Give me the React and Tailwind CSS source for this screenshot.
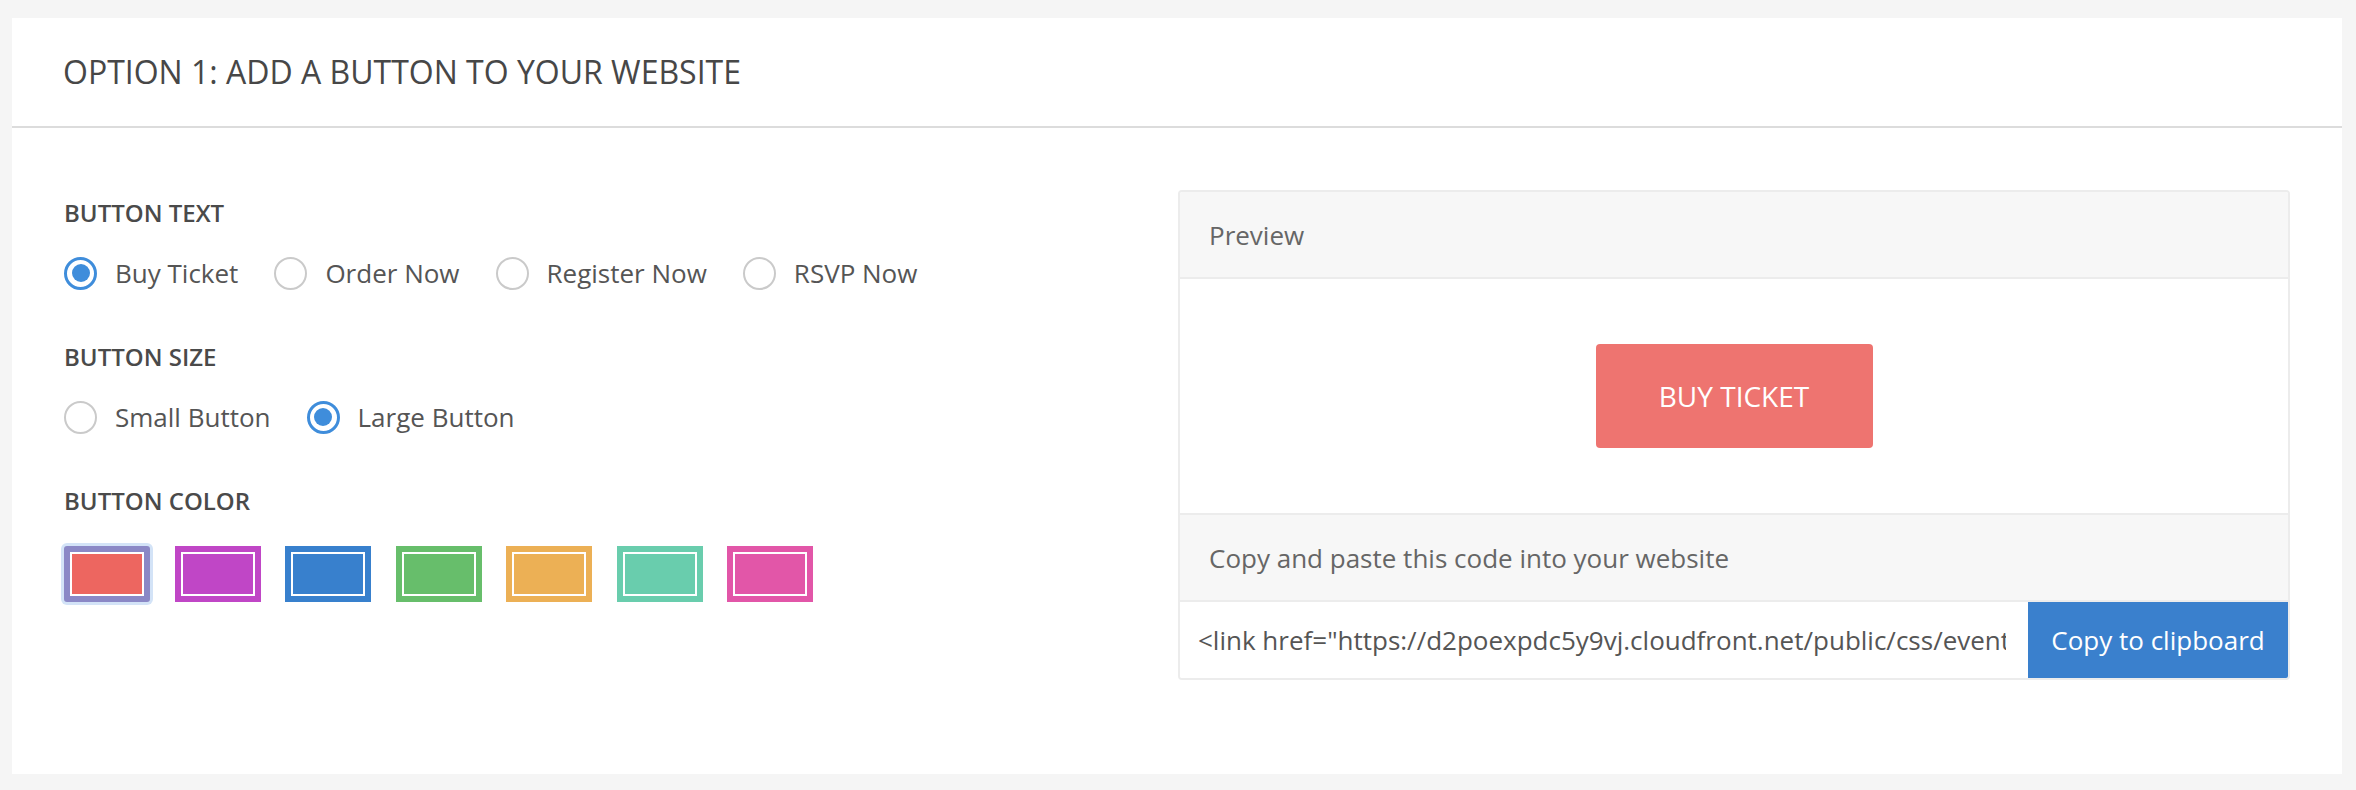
import React from "react";

const font = { fontFamily: '"Open Sans", "Liberation Sans", sans-serif' };

function Radio({ checked, label }) {
  return (
    <div className="flex items-center h-[32px]">
      {checked ? (
        <div className="w-[33px] h-[33px] rounded-full border-[3px] border-[#3f8ddb] bg-white flex items-center justify-center">
          <div className="w-[18px] h-[18px] rounded-full bg-[#3f8ddb]" />
        </div>
      ) : (
        <div className="w-[33px] h-[33px] rounded-full border-2 border-[#cacaca] bg-white" />
      )}
      <span className="ml-[18px] text-[26px] leading-[32px] text-[#555555]">{label}</span>
    </div>
  );
}

function Swatch({ color, selected }) {
  if (selected) {
    return (
      <div className="w-[86px] h-[56px] rounded-[3px] bg-[#8b88c6] p-[6px] shadow-[0_0_0_3px_#d3e3f7]">
        <div className="w-full h-full border-2 border-white" style={{ backgroundColor: color }} />
      </div>
    );
  }
  return (
    <div className="w-[86px] h-[56px] p-[6px]" style={{ backgroundColor: color }}>
      <div className="w-full h-full border-2 border-white" />
    </div>
  );
}

function Label({ children }) {
  return (
    <div className="text-[24px] leading-[32px] font-semibold text-[#4a4a4a]">{children}</div>
  );
}

export default function App() {
  const colors = ["#ed6660", "#c046c6", "#3880cd", "#67be6b", "#ecb055", "#69cdad", "#e256a8"];
  const code =
    '<link href="https://d2poexpdc5y9vj.cloudfront.net/public/css/eventbrite-button.css" rel="stylesheet">';
  return (
    <div className="min-h-[790px] bg-[#f5f5f5] pt-[18px] pl-[12px] pr-[14px] pb-[16px]" style={font}>
      <div className="bg-white h-[756px]">
        <div className="h-[110px] flex items-center pl-[51px] border-b-2 border-[#dcdcdc]">
          <h1 className="text-[32px] leading-[40px] text-[#474747] font-normal">
            OPTION 1: ADD A BUTTON TO YOUR WEBSITE
          </h1>
        </div>
        <div className="flex px-[52px] pt-[62px]">
          <div className="flex-1 pt-[7px]">
            <Label>BUTTON TEXT</Label>
            <div className="mt-[28px] flex items-center gap-[36px]">
              <Radio checked label="Buy Ticket" />
              <Radio label="Order Now" />
              <Radio label="Register Now" />
              <Radio label="RSVP Now" />
            </div>
            <div className="mt-[52px]">
              <Label>BUTTON SIZE</Label>
            </div>
            <div className="mt-[28px] flex items-center gap-[36px]">
              <Radio label="Small Button" />
              <Radio checked label="Large Button" />
            </div>
            <div className="mt-[52px]">
              <Label>BUTTON COLOR</Label>
            </div>
            <div className="mt-[29px] flex gap-[24.5px]">
              {colors.map((c, i) => (
                <Swatch key={c} color={c} selected={i === 0} />
              ))}
            </div>
          </div>
          <div className="w-[1112px] border-2 border-[#ececec] rounded-[4px] overflow-hidden">
            <div className="h-[87px] bg-[#f7f7f7] border-b-2 border-[#ececec] flex items-center pl-[29px]">
              <span className="text-[26px] leading-[36px] text-[#666666]">Preview</span>
            </div>
            <div className="h-[236px] border-b-2 border-[#ececec] flex items-center justify-center bg-white">
              <div className="w-[277px] h-[104px] rounded-[4px] bg-[#ee7470] flex items-center justify-center">
                <span className="text-[28px] leading-[36px] text-white">BUY TICKET</span>
              </div>
            </div>
            <div className="h-[87px] bg-[#f7f7f7] border-b-2 border-[#ececec] flex items-center pl-[29px]">
              <span className="text-[26px] leading-[36px] text-[#666666]">
                Copy and paste this code into your website
              </span>
            </div>
            <div className="h-[76px] flex bg-white">
              <div className="flex-1 min-w-0 flex items-center pl-[18px] pr-[22px]">
                <input
                  readOnly
                  value={code}
                  className="w-full bg-transparent outline-none border-0 p-0 text-[26px] leading-[36px] text-[#555555]"
                  style={font}
                />
              </div>
              <div className="w-[260px] bg-[#3a80cd] flex items-center justify-center">
                <span className="text-[26px] leading-[36px] text-white">Copy to clipboard</span>
              </div>
            </div>
          </div>
        </div>
      </div>
    </div>
  );
}
